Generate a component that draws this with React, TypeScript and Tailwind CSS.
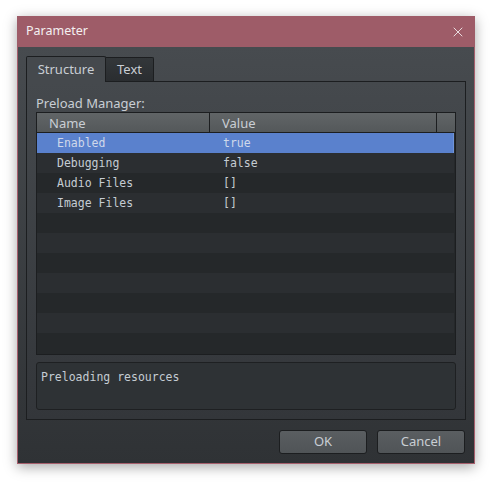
import { X } from "lucide-react";

const rows = [
  { name: "Enabled", value: "true" },
  { name: "Debugging", value: "false" },
  { name: "Audio Files", value: "[]" },
  { name: "Image Files", value: "[]" },
];

const ui = "font-['Noto_Sans',sans-serif]";
const mono = "font-['DejaVu_Sans_Mono',monospace]";

function PropertyTable() {
  // pad out to a full page of rows so the stripes run to the bottom
  const filled = [...rows, ...Array.from({ length: 11 - rows.length }, () => null)];
  return (
    <div className="h-[243px] border border-[#1c1e20] bg-[#25282a] flex flex-col">
      <div className={`h-[20px] flex border-b border-[#1c1e20] bg-gradient-to-b from-[#616567] to-[#54585a] text-[13px] leading-none text-[#c9ced4] ${ui}`}>
        <div className="w-[173px] border-r border-[#1c1e20] pl-[12px] pt-[2px] flex items-center">Name</div>
        <div className="w-[227px] border-r border-[#1c1e20] pl-[12px] pt-[2px] flex items-center">Value</div>
        <div className="flex-1" />
      </div>
      {filled.map((row, i) => {
        const selected = i === 0;
        const bg = selected
          ? "bg-[#5a81cd] border-r border-[#7094d8]"
          : i % 2 === 1
            ? "bg-[#2b2e31]"
            : "bg-[#25282a]";
        return (
          <div
            key={i}
            className={`h-[20px] mr-[1px] pt-[2px] flex items-center text-[11.5px] ${mono} ${selected ? "text-[#cfd8ea]" : "text-[#c5ccd3]"} ${bg}`}
          >
            {row && (
              <>
                <span className="w-[174px] pl-[20px]">{row.name}</span>
                <span className="pl-[12px]">{row.value}</span>
              </>
            )}
          </div>
        );
      })}
    </div>
  );
}

export default function App() {
  return (
    <div className="w-[496px] h-[486px] bg-white pt-[16px] pl-[17px]">
      <div className="w-[458px] h-[448px] flex flex-col border-x border-b border-[#a65e6c] shadow-[0_3px_12px_rgba(0,0,0,0.35)]">
        {/* title bar */}
        <div className={`h-[31px] -mx-[1px] bg-[#9e5c68] flex items-center justify-between pl-[9px] pr-[9px] ${ui}`}>
          <span className="text-[12.5px] text-[#f4f0f1]">Parameter</span>
          <X size={16} strokeWidth={1.3} className="text-[#f4f0f1]" />
        </div>

        {/* dialog body */}
        <div className="flex-1 flex flex-col px-[8px] pt-[9px] pb-[9px] bg-gradient-to-b from-[#474b4f] to-[#2f3235]">
          <div className={`flex items-end h-[25px] text-[13px] leading-none ${ui}`}>
            <div className="w-[80px] h-[26px] -mb-[1px] border-x border-t border-[#1c1e20] bg-[#45494d] rounded-t-[2px] flex items-center justify-center text-[#c9ced4] relative z-10">
              Structure
            </div>
            <div className="w-[48px] h-[24px] border-r border-t border-[#1c1e20] bg-gradient-to-b from-[#33373a] to-[#2a2d30] rounded-tr-[2px] flex items-center justify-center text-[#c9ced4]">
              Text
            </div>
          </div>

          {/* tab page */}
          <div className="h-[339px] border border-[#1c1e20] bg-gradient-to-b from-[#45494d] to-[#33363a] px-[9px] pt-[13px] pb-[9px] flex flex-col">
            <div className={`text-[13px] leading-[17px] text-[#c9ced4] ${ui}`}>Preload Manager:</div>
            <PropertyTable />
            <div className={`mt-[7px] h-[48px] rounded-[3px] border border-[#1e2022] bg-[#2e3235] px-[4px] pt-[6px] text-[11.5px] text-[#c5ccd3] ${mono}`}>
              Preloading resources
            </div>
          </div>

          <div className={`mt-[10px] flex justify-end gap-[10px] pr-[1px] text-[13px] ${ui}`}>
            <button className="w-[88px] h-[24px] rounded-[3px] border border-[#1c1e20] bg-gradient-to-b from-[#5a5e61] to-[#505457] text-[#c9ced4]">
              OK
            </button>
            <button className="w-[88px] h-[24px] rounded-[3px] border border-[#1c1e20] bg-gradient-to-b from-[#5a5e61] to-[#505457] text-[#c9ced4]">
              Cancel
            </button>
          </div>
        </div>
      </div>
    </div>
  );
}
